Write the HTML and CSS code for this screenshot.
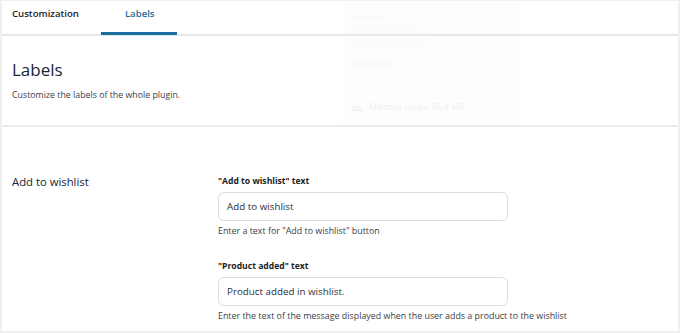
FILE: index.html
```html
<!DOCTYPE html>
<html>
<head>
<meta charset="utf-8">
<link rel="stylesheet" href="styles.css">
</head>
<body>
<div class="panel">
  <nav class="tabs">
    <div class="tab">Customization</div>
    <div class="tab active">Labels</div>
  </nav>
  <header class="head">
    <h1 class="title">Labels</h1>
    <p class="desc">Customize the labels of the whole plugin.</p>
  </header>
  <section class="section">
    <div class="section-name">Add to wishlist</div>
    <div class="fields">
      <div class="field">
        <div class="label">"Add to wishlist" text</div>
        <div class="input">Add to wishlist</div>
        <div class="help">Enter a text for "Add to wishlist" button</div>
      </div>
      <div class="field">
        <div class="label">"Product added" text</div>
        <div class="input">Product added in wishlist.</div>
        <div class="help">Enter the text of the message displayed when the user adds a product to the wishlist</div>
      </div>
    </div>
  </section>
  <div class="ghost">
    <div class="ghost-line l1"></div>
    <div class="ghost-line l2"></div>
    <div class="ghost-line l3"></div>
    <div class="ghost-line l4"></div>
    <div class="ghost-line l5"></div>
    <div class="ghost-mem">
      <svg width="12" height="10" viewBox="0 0 12 10"><path d="M1.5 8.5a4.5 4.5 0 1 1 9 0z" fill="none" stroke="currentColor" stroke-width="1"/><path d="M6 8L8 5" stroke="currentColor" stroke-width="1"/></svg>
      <span>Memory usage: 65.4 MB</span>
    </div>
  </div>
</div>
</body>
</html>
```
FILE: styles.css
```css
html, body {
  margin: 0;
  padding: 0;
}
body {
  background: #f0f0f1;
  font-family: "Open Sans", "Noto Sans", sans-serif;
  color: #1d2327;
  width: 680px;
  height: 333px;
  overflow: hidden;
}
.panel {
  position: relative;
  margin: 1px 2px 0 2px;
  height: 330px;
  background: #fff;
  overflow: hidden;
}
.tabs {
  display: flex;
  height: 33px;
  border-bottom: 2px solid #e4e9f0;
  padding-left: 10px;
}
.tab {
  font-size: 9.6px;
  font-weight: 600;
  color: #1d2327;
  line-height: 26px;
  margin-right: 22px;
}
.tab.active {
  color: #1f6d9e;
  padding: 0 22px 0 24px;
  border-bottom: 3px solid #1a6fa0;
  margin-bottom: -1px;
  box-sizing: border-box;
  height: 34px;
}
.head {
  padding: 22px 10px 0 10px;
  height: 67px;
  border-bottom: 2px solid #ececf0;
}
.title {
  margin: 0;
  font-size: 17px;
  font-weight: 400;
  line-height: 24px;
  color: #1a2433;
}
.desc {
  margin: 6px 0 0 0;
  font-size: 8.8px;
  line-height: 14px;
  color: #3a4048;
}
.section {
  display: flex;
  padding: 46px 10px 0 10px;
}
.section-name {
  width: 206px;
  flex: none;
  font-size: 11.3px;
  line-height: 18px;
  color: #1a2433;
}
.fields {
  display: flex;
  flex-direction: column;
  gap: 21px;
}
.label {
  font-size: 8.6px;
  font-weight: 700;
  line-height: 14px;
  color: #1a1e24;
  margin-top: 1px;
}
.input {
  margin-top: 4px;
  width: 290px;
  height: 29px;
  box-sizing: border-box;
  border: 1px solid #dcdde6;
  border-radius: 6px;
  padding-left: 8px;
  font-size: 9.8px;
  line-height: 27px;
  color: #2a2f36;
}
.help {
  margin-top: 3px;
  font-size: 8.9px;
  line-height: 13px;
  color: #3a4048;
}
.ghost {
  position: absolute;
  left: 340px;
  top: 2px;
  width: 178px;
  height: 124px;
  background: rgba(240, 240, 245, 0.1);
  color: rgba(200, 200, 210, 0.3);
}
.ghost-line {
  position: absolute;
  height: 3px;
  background: rgba(210, 210, 220, 0.05);
}
.l1 { left: 6px; top: 13px; width: 40px; }
.l2 { left: 6px; top: 21px; width: 65px; }
.l3 { left: 6px; top: 28px; width: 80px; }
.l4 { left: 6px; top: 41px; width: 80px; }
.l5 { left: 6px; top: 56px; width: 45px; height: 8px; }
.ghost-mem {
  position: absolute;
  left: 9px;
  top: 98px;
  display: flex;
  align-items: center;
  gap: 6px;
  font-size: 8.5px;
}
```
